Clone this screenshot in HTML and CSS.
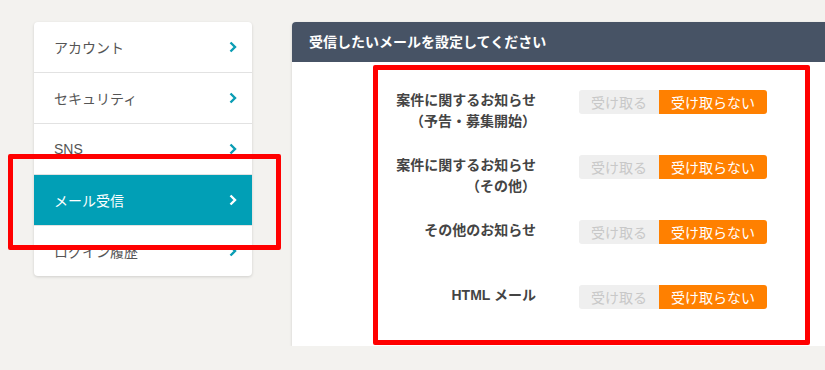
FILE: index.html
```html
<!DOCTYPE html>
<html lang="ja">
<head>
    <meta charset="UTF-8">
    <meta name="viewport" content="width=device-width, initial-scale=1.0">
    <title>メール受信設定</title>
    <link rel="stylesheet" href="styles.css">
</head>
<body>
    <div class="page">
        <nav class="side-menu">
            <a class="menu-item" href="#">アカウント
                <svg class="chevron" width="8" height="12" viewBox="0 0 8 12"><path d="M1.5 1.5 L6 6 L1.5 10.5" fill="none" stroke="currentColor" stroke-width="2.4"/></svg>
            </a>
            <a class="menu-item" href="#">セキュリティ
                <svg class="chevron" width="8" height="12" viewBox="0 0 8 12"><path d="M1.5 1.5 L6 6 L1.5 10.5" fill="none" stroke="currentColor" stroke-width="2.4"/></svg>
            </a>
            <a class="menu-item" href="#">SNS
                <svg class="chevron" width="8" height="12" viewBox="0 0 8 12"><path d="M1.5 1.5 L6 6 L1.5 10.5" fill="none" stroke="currentColor" stroke-width="2.4"/></svg>
            </a>
            <a class="menu-item active" href="#">メール受信
                <svg class="chevron" width="8" height="12" viewBox="0 0 8 12"><path d="M1.5 1.5 L6 6 L1.5 10.5" fill="none" stroke="currentColor" stroke-width="2.4"/></svg>
            </a>
            <a class="menu-item" href="#">ログイン履歴
                <svg class="chevron" width="8" height="12" viewBox="0 0 8 12"><path d="M1.5 1.5 L6 6 L1.5 10.5" fill="none" stroke="currentColor" stroke-width="2.4"/></svg>
            </a>
        </nav>

        <section class="panel">
            <h2 class="panel-title">受信したいメールを設定してください</h2>
            <div class="setting-list">
                <div class="setting-row">
                    <div class="setting-label">案件に関するお知らせ<br>（予告・募集開始）</div>
                    <div class="toggle">
                        <span class="toggle-opt">受け取る</span>
                        <span class="toggle-opt on">受け取らない</span>
                    </div>
                </div>
                <div class="setting-row">
                    <div class="setting-label">案件に関するお知らせ<br>（その他）</div>
                    <div class="toggle">
                        <span class="toggle-opt">受け取る</span>
                        <span class="toggle-opt on">受け取らない</span>
                    </div>
                </div>
                <div class="setting-row">
                    <div class="setting-label">その他のお知らせ</div>
                    <div class="toggle">
                        <span class="toggle-opt">受け取る</span>
                        <span class="toggle-opt on">受け取らない</span>
                    </div>
                </div>
                <div class="setting-row">
                    <div class="setting-label">HTML メール</div>
                    <div class="toggle">
                        <span class="toggle-opt">受け取る</span>
                        <span class="toggle-opt on">受け取らない</span>
                    </div>
                </div>
            </div>
        </section>
    </div>

    <!-- red highlight marks -->
    <div class="mark mark-menu"></div>
    <div class="mark mark-list"></div>
</body>
</html>
```

FILE: styles.css
```css
/* base */
body {
    font-family: "Liberation Sans", "Noto Sans CJK JP", sans-serif;
    margin: 0;
    padding: 0;
    background-color: #f3f2ef;
    color: #444;
    overflow: hidden;
}

.page {
    display: flex;
    align-items: flex-start;
    gap: 40px;
    padding: 22px 0 0 34px;
}

/* side menu */
.side-menu {
    width: 218px;
    flex-shrink: 0;
    background-color: #ffffff;
    border-radius: 4px;
    box-shadow: 0 1px 3px rgba(0, 0, 0, 0.15);
    overflow: hidden;
}

.menu-item {
    display: flex;
    align-items: center;
    justify-content: space-between;
    height: 50px;
    padding: 0 15px 0 20px;
    font-size: 14px;
    color: #555;
    text-decoration: none;
    border-bottom: 1px solid #e2e2e2;
}

.menu-item:last-child {
    border-bottom: none;
}

.menu-item .chevron {
    color: #0a9db4;
}

.menu-item.active {
    background-color: #019fb6;
    color: #ffffff;
}

.menu-item.active .chevron {
    color: #ffffff;
}

/* panel */
.panel {
    width: 560px;
    flex-shrink: 0;
    background-color: #ffffff;
    border-radius: 4px 4px 0 0;
    box-shadow: 0 1px 3px rgba(0, 0, 0, 0.15);
}

.panel-title {
    margin: 0;
    height: 40px;
    line-height: 40px;
    padding-left: 17px;
    background-color: #475365;
    color: #ffffff;
    font-size: 14px;
    font-weight: bold;
    border-radius: 4px 4px 0 0;
}

.setting-list {
    display: flex;
    flex-direction: column;
    gap: 21px;
    padding: 28px 0 17px;
}

.setting-row {
    display: flex;
    align-items: flex-start;
    gap: 43px;
    min-height: 44px;
}

.setting-label {
    width: 244px;
    text-align: right;
    font-size: 14px;
    font-weight: bold;
    line-height: 21px;
    color: #444;
}

.toggle {
    display: flex;
    height: 24px;
    border-radius: 3px;
    overflow: hidden;
}

.toggle-opt {
    display: flex;
    align-items: center;
    padding: 0 12px;
    font-size: 14px;
    background-color: #efefef;
    color: #c8c8c8;
}

.toggle-opt.on {
    background-color: #ff8000;
    color: #ffffff;
}

/* red marks over the screenshot */
.mark {
    position: absolute;
    border: 5px solid #ff0000;
    border-radius: 2px;
    box-sizing: border-box;
}

.mark-menu {
    left: 8px;
    top: 154px;
    width: 273px;
    height: 96px;
}

.mark-list {
    left: 373px;
    top: 65px;
    width: 437px;
    height: 280px;
}
```
